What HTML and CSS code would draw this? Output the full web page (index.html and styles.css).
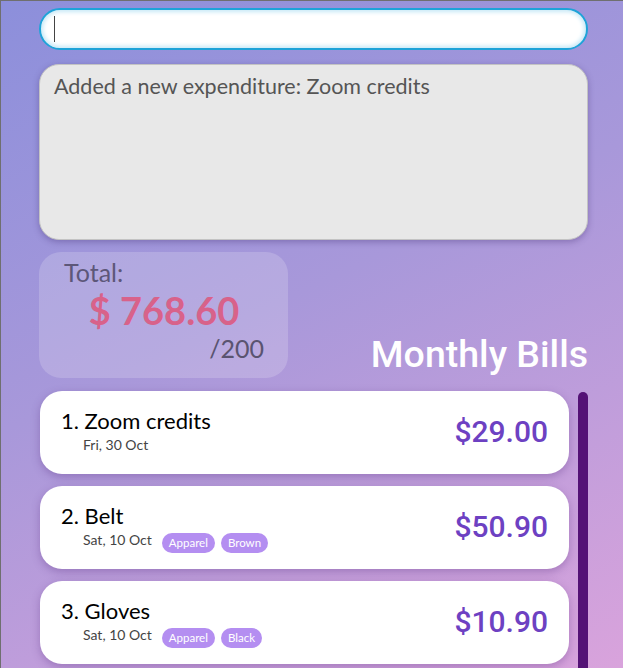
FILE: index.html
```html
<!DOCTYPE html>
<html>
<head>
<meta charset="utf-8">
<link rel="stylesheet" href="styles.css">
</head>
<body>
<div class="app">
  <div class="command"><span class="caret"></span></div>
  <div class="result">Added a new expenditure: Zoom credits</div>
  <div class="summary-row">
    <div class="total">
      <div class="total-label">Total:</div>
      <div class="total-value">$ 768.60</div>
      <div class="total-budget">/200</div>
    </div>
    <h1 class="heading">Monthly Bills</h1>
  </div>
  <div class="list-area">
    <div class="cards">
      <div class="card">
        <div class="card-info">
          <div class="card-title">1. Zoom credits</div>
          <div class="card-meta"><span class="date">Fri, 30 Oct</span></div>
        </div>
        <div class="amount">$29.00</div>
      </div>
      <div class="card">
        <div class="card-info">
          <div class="card-title">2. Belt</div>
          <div class="card-meta"><span class="date">Sat, 10 Oct</span><span class="tag">Apparel</span><span class="tag">Brown</span></div>
        </div>
        <div class="amount">$50.90</div>
      </div>
      <div class="card">
        <div class="card-info">
          <div class="card-title">3. Gloves</div>
          <div class="card-meta"><span class="date">Sat, 10 Oct</span><span class="tag">Apparel</span><span class="tag">Black</span></div>
        </div>
        <div class="amount">$10.90</div>
      </div>
    </div>
    <div class="scrollbar"></div>
  </div>
</div>
</body>
</html>
```

FILE: styles.css
```css
html, body {
  margin: 0;
  padding: 0;
  height: 100%;
  overflow: hidden;
}
body {
  background: #6f6f6f;
  font-family: "Lato", "Liberation Sans", sans-serif;
}
.app {
  box-sizing: border-box;
  margin-left: 1px;
  margin-top: 1px;
  height: 667px;
  background: linear-gradient(155deg, #8c8fdb 0%, #a898da 45%, #d9a3dc 100%);
  padding: 7px 35px 0 38px;
  display: flex;
  flex-direction: column;
  overflow: hidden;
}
.command {
  box-sizing: border-box;
  height: 42px;
  width: 549px;
  background: #fff;
  border: 2px solid #1ea3d8;
  border-radius: 21px;
  box-shadow: inset 0 0 4px 2px #c6e8f6;
  display: flex;
  align-items: center;
  padding-left: 13px;
}
.caret {
  display: block;
  width: 1px;
  height: 26px;
  background: #444;
}
.result {
  box-sizing: border-box;
  margin-top: 14px;
  height: 176px;
  width: 549px;
  background: #e8e8e8;
  border: 1px solid #c3c3c3;
  border-radius: 20px;
  box-shadow: 0 2px 6px rgba(60, 40, 110, 0.35);
  padding: 8px 14px;
  font-size: 21.5px;
  color: #555;
}
.summary-row {
  margin-top: 12px;
  width: 549px;
  display: flex;
  justify-content: space-between;
  align-items: flex-end;
}
.total {
  box-sizing: border-box;
  width: 249px;
  height: 126px;
  border-radius: 22px;
  background: rgba(255, 255, 255, 0.18);
  padding: 5px 24px 0 25px;
  display: flex;
  flex-direction: column;
}
.total-label {
  font-size: 25px;
  line-height: 30px;
  color: #5d5779;
}
.total-value {
  font-size: 38px;
  line-height: 44px;
  font-weight: 700;
  color: #d8628a;
  align-self: center;
  margin-top: 1px;
}
.total-budget {
  font-size: 25px;
  line-height: 30px;
  color: #5a5470;
  align-self: flex-end;
  margin-top: 1px;
}
.heading {
  margin: 0 0 4px 0;
  font-family: "Roboto", "Liberation Sans", sans-serif;
  font-weight: 500;
  font-size: 37.5px;
  line-height: 40px;
  color: #fff;
}
.list-area {
  margin-top: 13px;
  flex: 1;
  display: flex;
  width: 550px;
}
.cards {
  margin-left: 1px;
  width: 529px;
  display: flex;
  flex-direction: column;
  gap: 12px;
}
.card {
  box-sizing: border-box;
  height: 83px;
  background: #fff;
  border-radius: 22px;
  box-shadow: 0 3px 8px rgba(90, 50, 130, 0.35);
  display: flex;
  align-items: center;
  justify-content: space-between;
  padding: 0 21px 0 21px;
  flex-shrink: 0;
}
.card-info {
  display: flex;
  flex-direction: column;
  margin-top: -2px;
}
.card-title {
  font-size: 22px;
  line-height: 26px;
  color: #000;
}
.card-meta {
  display: flex;
  align-items: center;
  padding-left: 22px;
  height: 22px;
}
.date {
  font-size: 14px;
  color: #444;
  margin-right: 10px;
}
.tag {
  font-size: 11.5px;
  color: #fff;
  background: #b48ef1;
  border-radius: 10px;
  height: 20px;
  line-height: 20px;
  padding: 0 7px;
  margin-right: 6px;
  margin-top: 7px;
}
.amount {
  font-family: "Roboto", "Liberation Sans", sans-serif;
  font-weight: 500;
  font-size: 30px;
  color: #6d41c2;
  margin-top: -3px;
}
.scrollbar {
  margin-left: 9px;
  margin-top: 1px;
  width: 10px;
  flex-shrink: 0;
  background: #541276;
  border-radius: 5px 5px 0 0;
}
```
